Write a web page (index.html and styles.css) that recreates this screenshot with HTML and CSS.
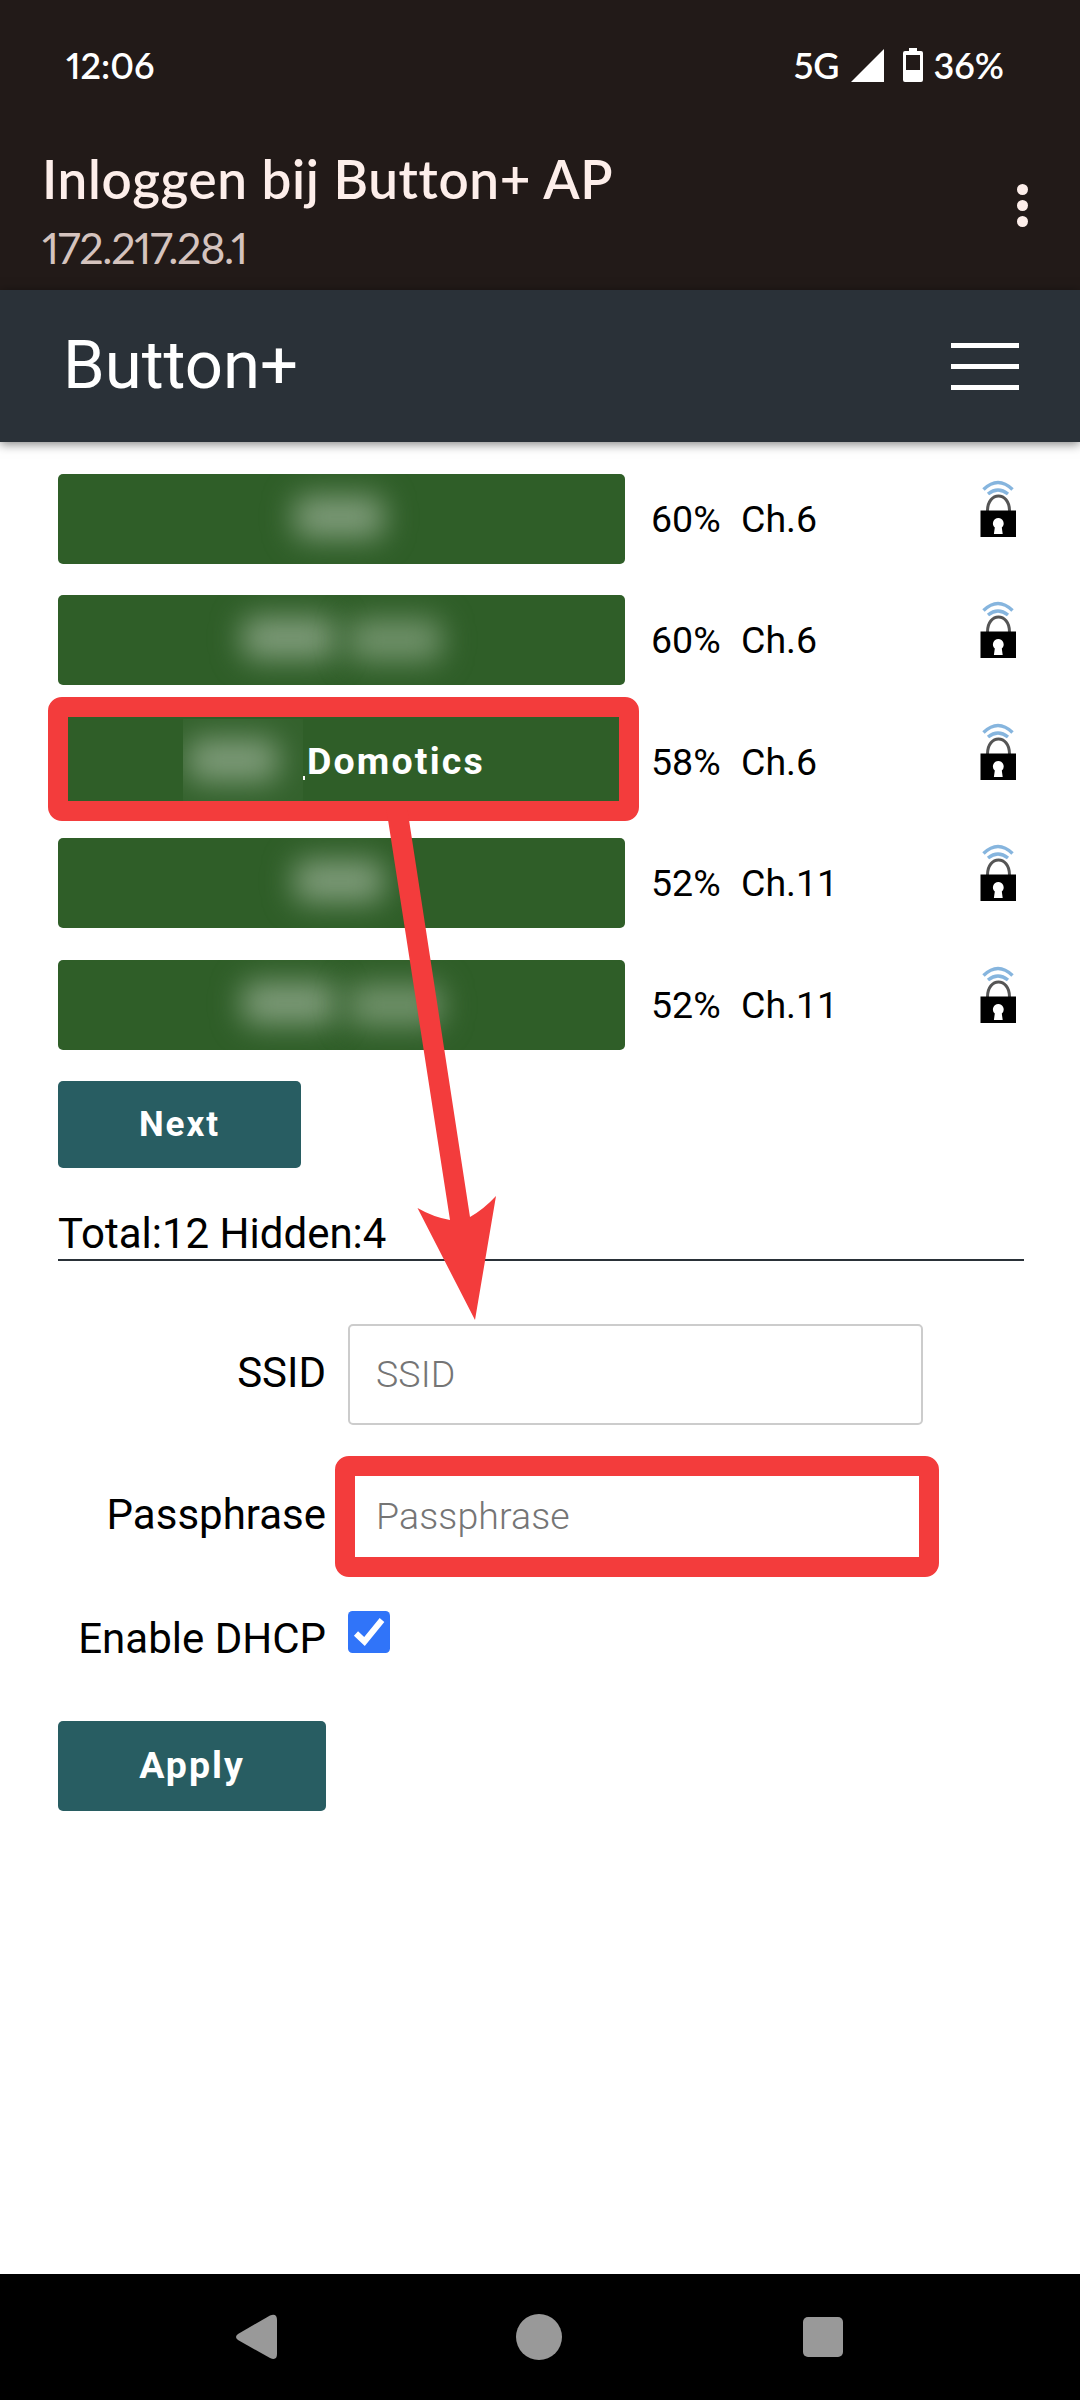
FILE: index.html
```html
<!DOCTYPE html>
<html lang="nl">
<head>
<meta charset="utf-8">
<title>Inloggen bij Button+ AP</title>
<link rel="stylesheet" href="styles.css">
</head>
<body>
<svg class="defs" aria-hidden="true">
  <symbol id="lock" viewBox="0 0 38 58">
    <g fill="none" stroke="#86b5de" stroke-width="3.500">
      <path d="M4.500 9.500Q19-4.500 33.500 9.500"/>
      <path d="M9 14Q19 6 29 14"/>
    </g>
    <path d="M8.500 31C8.500 11 30.500 11 30.500 31" fill="none" stroke="#555" stroke-width="3"/>
    <path d="M1.500 30.500H37V57H1.500Z"/>
    <path d="M19.300 38a5.500 5.500 0 0 1 3.500 9.600l.9 6.400h-8.800l.9-6.400A5.500 5.500 0 0 1 19.300 38Z" fill="#fff"/>
  </symbol>
</svg>
<div class="phone">
  <div class="status">
    <span>12:06</span>
    <div class="status-right">
      <span>5G</span>
      <svg class="signal" viewBox="0 0 33 33"><path d="M33 0V33H0Z" fill="#fff"/></svg>
      <svg class="battery" viewBox="0 0 20 34"><path d="M6 0h8v3h4q2 0 2 2v27q0 2-2 2H2q-2 0-2-2V5q0-2 2-2h4ZM3 7v15h14V7Z" fill="#fff" fill-rule="evenodd"/></svg>
      <span>36%</span>
    </div>
  </div>
  <div class="login">
    <div>
      <div class="login-title">Inloggen bij Button+ AP</div>
      <div class="login-host">172.217.28.1</div>
    </div>
    <div class="dots"><i></i><i></i><i></i></div>
  </div>
  <header class="bar">
    <span class="brand">Button+</span>
    <div class="burger"><i></i><i></i><i></i></div>
  </header>
  <main class="content">
    <div class="networks">
      <div class="row"><button class="ssid"><i class="smudge"></i></button><span class="pct">60%</span><span class="ch">Ch.6</span><svg class="lock"><use href="#lock"/></svg></div>
      <div class="row"><button class="ssid pair"><i class="smudge left"></i><i class="smudge right"></i></button><span class="pct">60%</span><span class="ch">Ch.6</span><svg class="lock"><use href="#lock"/></svg></div>
      <div class="row"><button class="ssid named"><span class="mask"><i class="smudge"></i></span><i class="tick"></i><span class="name">Domotics</span></button><span class="pct">58%</span><span class="ch">Ch.6</span><svg class="lock"><use href="#lock"/></svg><div class="mark mark-row"></div></div>
      <div class="row"><button class="ssid"><i class="smudge"></i></button><span class="pct">52%</span><span class="ch">Ch.11</span><svg class="lock"><use href="#lock"/></svg></div>
      <div class="row"><button class="ssid pair"><i class="smudge left"></i><i class="smudge right"></i></button><span class="pct">52%</span><span class="ch">Ch.11</span><svg class="lock"><use href="#lock"/></svg></div>
    </div>
    <button class="btn next">Next</button>
    <div class="total">Total:12 Hidden:4</div>
    <div class="field"><label class="label" for="ssid">SSID</label><input class="input" id="ssid" placeholder="SSID"></div>
    <div class="field pass"><label class="label" for="pass">Passphrase</label><input class="input" id="pass" placeholder="Passphrase"><div class="mark mark-pass"></div></div>
    <div class="field dhcp"><span class="label">Enable DHCP</span><svg class="check" viewBox="0 0 42 42"><rect width="42" height="42" rx="4.500" fill="#3074f9"/><path d="M8 22.500L16.500 30.500L34 9" fill="none" stroke="#fff" stroke-width="6"/></svg></div>
    <button class="btn apply">Apply</button>
    <svg class="arrow" viewBox="0 0 90 510"><path d="M-.5 0H20.500L83 407Q97 399 109 386L88 510L30.500 398Q46 407 63 410Z" fill="#f33c3c"/></svg>
  </main>
  <nav class="nav">
    <svg class="back" viewBox="0 0 41 46"><path d="M2 20L34 1.500Q41-1 41 6V40Q41 47 34 44L2 26Q-2 23 2 20Z" fill="#999"/></svg>
    <i class="home"></i>
    <i class="recent"></i>
  </nav>
</div>
</body>
</html>
```
FILE: styles.css
```css
* { box-sizing: border-box; }
body { margin: 0; background: #fff; font-family: Roboto, sans-serif; color: #000; }
button { border: 0; padding: 0; font: inherit; color: inherit; }
i { display: block; }
.defs { position: absolute; width: 0; height: 0; }
.phone { width: 1080px; height: 2400px; display: flex; flex-direction: column; overflow: hidden; }

.status { height: 130px; padding: 0 76px 0 66px; background: #221a18; color: #fff; display: flex; justify-content: space-between; align-items: center; font: 600 36px Lato, sans-serif; font-feature-settings: "pnum"; }
.status-right { display: flex; align-items: center; }
.signal { width: 33px; height: 33px; margin: 0 19px 0 11px; }
.battery { width: 20px; height: 34px; margin-right: 11px; }

.login { height: 160px; padding: 14px 52px 0 42px; background: #221a18; display: flex; justify-content: space-between; font-family: Lato, sans-serif; font-feature-settings: "pnum"; }
.login-title { height: 74px; line-height: 70px; font-size: 53px; font-weight: 600; letter-spacing: .65px; color: #fdeeea; }
.login-host { height: 60px; line-height: 60px; font-size: 43px; letter-spacing: -1.300px; color: #d5c3be; }
.dots { display: flex; flex-direction: column; gap: 5px; padding-top: 40px; }
.dots i { width: 11px; height: 11px; border-radius: 50%; background: #fdeeea; }

.bar { height: 152px; padding: 0 61px 0 63px; background: #2a3138; box-shadow: 0 2px 10px rgba(0, 0, 0, .5); display: flex; align-items: center; justify-content: space-between; flex: none; }
.brand { color: #fff; font-size: 67px; margin-bottom: 2px; }
.burger { display: flex; flex-direction: column; gap: 16px; }
.burger i { width: 68px; height: 5px; background: #fff; }

.content { position: relative; flex: 1; padding: 32px 56px 0 58px; }
.networks { display: grid; grid-auto-rows: 90px; row-gap: 31.400px; }
.row { position: relative; display: grid; grid-template-columns: 567px 26px 90px 238px 38px; align-items: center; font-size: 37.500px; }
.ssid { grid-column: 1; height: 90px; border-radius: 5px; background: #2f5e28; color: #fff; font-size: 37.500px; font-weight: 700; letter-spacing: 2px; display: flex; align-items: center; justify-content: center; overflow: hidden; }
.pct { grid-column: 3; }
.ch { grid-column: 4; }
.lock { grid-column: 5; width: 38px; height: 58px; margin-bottom: 20px; }
.smudge { width: 90px; height: 42px; margin: 0 5px 4px 0; border-radius: 12px; background: #7f9c7a; filter: blur(15px); }
.pair { gap: 12px; }
.pair .smudge { width: 94px; margin-right: 0; }
.pair .right { margin-top: 4px; background: #71926b; }
.named { justify-content: flex-start; padding-left: 125px; }
.name { margin-bottom: 2px; letter-spacing: 2.150px; }
.mask { width: 120px; height: 86px; overflow: hidden; display: flex; align-items: center; padding-left: 5px; background: #34622d; }
.tick { width: 2px; height: 4px; margin: 32px 2px 0 0; background: #fff; }
.mark { position: absolute; border: 20px solid #f33c3c; border-radius: 14px; }
.mark-row { left: -10px; top: -20px; width: 591px; height: 124px; }

.btn { display: flex; align-items: center; justify-content: center; border-radius: 5px; background: #285d62; color: #fff; font-size: 37.500px; font-weight: 700; letter-spacing: 2px; }
.next { width: 243px; height: 87px; margin-top: 31.400px; font-size: 35px; }
.total { height: 93px; padding-top: 42px; font-size: 42px; line-height: 48px; border-bottom: 2px solid #2a3138; }
.field { position: relative; display: flex; align-items: center; height: 101px; margin-top: 63px; }
.pass { margin-top: 41px; }
.label { width: 268px; margin: 0 22px 4px 0; text-align: right; font-size: 42px; }
.input { width: 575px; height: 101px; border: 2px solid #ccc; border-radius: 5px; padding: 0 26px; font: 300 37.500px Roboto, sans-serif; letter-spacing: .1px; background: #fff; }
.input::placeholder { color: #757575; }
.mark-pass { left: 277px; top: -10px; width: 604px; height: 121px; }
.dhcp { height: 56px; margin-top: 37px; }
.dhcp .label { margin: 13px 22px 0 0; }
.check { width: 42px; height: 42px; }
.apply { width: 268px; height: 90px; margin-top: 61px; padding-bottom: 2px; }
.arrow { position: absolute; left: 387px; top: 368px; width: 90px; height: 510px; overflow: visible; }

.nav { height: 126px; flex: none; background: #000; display: flex; align-items: center; padding-left: 236px; }
.back { width: 41px; height: 46px; }
.home { width: 46px; height: 46px; margin-left: 239px; border-radius: 50%; background: #999; }
.recent { width: 40px; height: 40px; margin-left: 241px; border-radius: 5px; background: #999; }
```
